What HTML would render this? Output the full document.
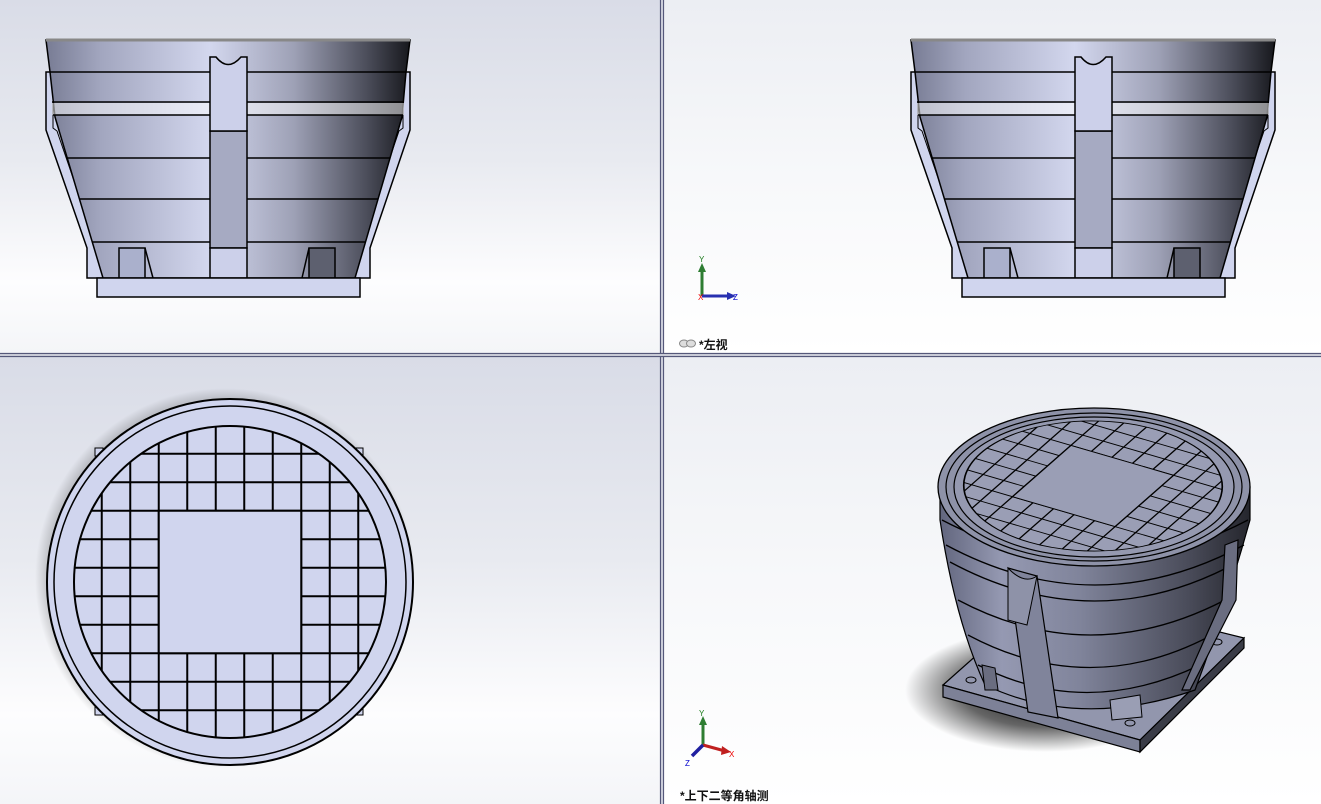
<!DOCTYPE html>
<html><head><meta charset="utf-8"><style>
html,body{margin:0;padding:0;width:1321px;height:804px;overflow:hidden;background:#fff}
svg{display:block}
text{font-family:"Liberation Sans","Noto Sans CJK SC",sans-serif}
</style></head><body>
<svg width="1321" height="804" viewBox="0 0 1321 804" xmlns="http://www.w3.org/2000/svg">
<defs>
<linearGradient id="bgL" x1="0" y1="0" x2="0" y2="1">
<stop offset="0" stop-color="#d9dce7"/><stop offset="0.45" stop-color="#e8eaf0"/><stop offset="0.8" stop-color="#fdfdfe"/><stop offset="1" stop-color="#f4f5f8"/></linearGradient>
<linearGradient id="bgR" x1="0" y1="0" x2="0" y2="1">
<stop offset="0" stop-color="#eceef3"/><stop offset="0.5" stop-color="#f7f8fa"/><stop offset="1" stop-color="#ffffff"/></linearGradient>
<linearGradient id="cone" x1="0" y1="0" x2="1" y2="0">
<stop offset="0" stop-color="#787c94"/><stop offset="0.15" stop-color="#a2a6bf"/><stop offset="0.45" stop-color="#d3d7ee"/><stop offset="0.68" stop-color="#9ea1b6"/><stop offset="0.88" stop-color="#4c4e5b"/><stop offset="1" stop-color="#17181d"/></linearGradient>
<linearGradient id="iso" x1="0" y1="0" x2="1" y2="0">
<stop offset="0" stop-color="#62667e"/><stop offset="0.2" stop-color="#9599b2"/><stop offset="0.45" stop-color="#80849b"/><stop offset="0.8" stop-color="#4a4c5a"/><stop offset="1" stop-color="#25262d"/></linearGradient>
<radialGradient id="shad" cx="0.5" cy="0.5" r="0.5">
<stop offset="0" stop-color="#000" stop-opacity="0.95"/><stop offset="0.6" stop-color="#000" stop-opacity="0.6"/><stop offset="1" stop-color="#000" stop-opacity="0"/></radialGradient>
<radialGradient id="shad2" cx="0.5" cy="0.5" r="0.5">
<stop offset="0.85" stop-color="#000" stop-opacity="0.4"/><stop offset="1" stop-color="#000" stop-opacity="0"/></radialGradient>
<clipPath id="gclip"><circle cx="0" cy="0" r="156"/></clipPath>
<g id="grid">
<circle cx="0" cy="0" r="156" fill="currentColor"/>
<g clip-path="url(#gclip)" stroke="#000" stroke-width="2">
<line x1="-128.25" y1="-160" x2="-128.25" y2="160"/><line x1="-99.75" y1="-160" x2="-99.75" y2="160"/><line x1="-71.25" y1="-160" x2="-71.25" y2="160"/><line x1="-42.75" y1="-160" x2="-42.75" y2="160"/><line x1="-14.25" y1="-160" x2="-14.25" y2="160"/><line x1="14.25" y1="-160" x2="14.25" y2="160"/><line x1="42.75" y1="-160" x2="42.75" y2="160"/><line x1="71.25" y1="-160" x2="71.25" y2="160"/><line x1="99.75" y1="-160" x2="99.75" y2="160"/><line x1="128.25" y1="-160" x2="128.25" y2="160"/>
<line y1="-128.25" x1="-160" y2="-128.25" x2="160"/><line y1="-99.75" x1="-160" y2="-99.75" x2="160"/><line y1="-71.25" x1="-160" y2="-71.25" x2="160"/><line y1="-42.75" x1="-160" y2="-42.75" x2="160"/><line y1="-14.25" x1="-160" y2="-14.25" x2="160"/><line y1="14.25" x1="-160" y2="14.25" x2="160"/><line y1="42.75" x1="-160" y2="42.75" x2="160"/><line y1="71.25" x1="-160" y2="71.25" x2="160"/><line y1="99.75" x1="-160" y2="99.75" x2="160"/><line y1="128.25" x1="-160" y2="128.25" x2="160"/>
</g>
<rect x="-71.25" y="-71.25" width="142.5" height="142.5" fill="currentColor" stroke="#000" stroke-width="2"/>
<circle cx="0" cy="0" r="156" fill="none" stroke="#000" stroke-width="2"/>
</g>
<g id="front" stroke="#000" stroke-width="1.5">
<polygon points="46,72 410,72 410,130 370,248 370,278 87,278 87,248 46,130" fill="#d0d5ee"/>
<polyline points="53,72 53,128 57,131 97,248" fill="none" stroke-width="1"/>
<polyline points="403,72 403,128 399,131 359,248" fill="none" stroke-width="1"/>
<polygon points="46,40 410,40 406,72 402,117 355,278 103,278 55,117 50,72" fill="url(#cone)"/>
<rect x="52" y="103" width="352" height="12" fill="#fff" fill-opacity="0.5" stroke="none"/>
<line x1="50" y1="72" x2="406" y2="72"/>
<line x1="52" y1="102" x2="404" y2="102"/>
<line x1="53" y1="115" x2="403" y2="115"/>
<line x1="67" y1="158" x2="390" y2="158"/>
<line x1="79" y1="199" x2="378" y2="199"/>
<line x1="92" y1="242" x2="365" y2="242"/>
<line x1="46" y1="40" x2="410" y2="40" stroke="#888" stroke-width="3"/>
<rect x="119" y="248" width="26" height="30" fill="#aab0cc"/>
<line x1="145" y1="248" x2="153" y2="278"/>
<rect x="309" y="248" width="26" height="30" fill="#5d606f"/>
<line x1="309" y1="248" x2="302" y2="278"/>
<rect x="210" y="131" width="37" height="117" fill="#a6aac2"/>
<path d="M210,131 L210,57 L216,57 Q228,72 241,57 L247,57 L247,131 Z" fill="#ccd0ea"/>
<rect x="210" y="248" width="37" height="30" fill="#ccd0ea"/>
<rect x="97" y="278" width="263" height="19" fill="#d0d5ee"/>
</g>
</defs>

<rect x="0" y="0" width="661" height="353" fill="url(#bgL)"/>
<rect x="664" y="0" width="657" height="353" fill="url(#bgR)"/>
<rect x="0" y="357" width="661" height="447" fill="url(#bgL)"/>
<rect x="664" y="357" width="657" height="447" fill="url(#bgR)"/>
<rect x="660" y="0" width="4" height="804" fill="#d8dae4"/>
<line x1="660.5" y1="0" x2="660.5" y2="804" stroke="#55587a" stroke-width="1.2"/>
<line x1="663.5" y1="0" x2="663.5" y2="804" stroke="#55587a" stroke-width="1.2"/>
<rect x="0" y="353" width="1321" height="4" fill="#d8dae4"/>
<line x1="0" y1="353.5" x2="1321" y2="353.5" stroke="#55587a" stroke-width="1.2"/>
<line x1="0" y1="356.5" x2="1321" y2="356.5" stroke="#55587a" stroke-width="1.2"/>

<use href="#front"/>
<use href="#front" transform="translate(865,0)"/>

<!-- top view -->
<circle cx="225" cy="578" r="190" fill="url(#shad2)"/>
<rect x="95" y="448" width="8" height="8" fill="#d0d5ee" stroke="#000"/>
<rect x="355" y="448" width="8" height="8" fill="#d0d5ee" stroke="#000"/>
<rect x="95" y="707" width="8" height="8" fill="#d0d5ee" stroke="#000"/>
<rect x="355" y="707" width="8" height="8" fill="#d0d5ee" stroke="#000"/>
<circle cx="230" cy="582" r="183" fill="#d0d5ee" stroke="#000" stroke-width="2"/>
<circle cx="230" cy="582" r="176" fill="none" stroke="#000" stroke-width="1.5"/>
<use href="#grid" transform="translate(230,582)" color="#d0d5ee"/>

<!-- isometric -->
<ellipse cx="1045" cy="690" rx="140" ry="62" fill="url(#shad)"/>
<polygon points="943,685 1140,740 1244,638 1050,590" fill="#9296ad" stroke="#000" stroke-width="1.2"/>
<polygon points="943,685 1140,740 1140,752 943,697" fill="#7d8197" stroke="#000" stroke-width="1.2"/>
<polygon points="1140,740 1244,638 1244,648 1140,752" fill="#3a3c47" stroke="#000" stroke-width="1.2"/>
<ellipse cx="971" cy="680" rx="5" ry="3" fill="none" stroke="#000"/>
<ellipse cx="1130" cy="723" rx="5" ry="3" fill="none" stroke="#000"/>
<ellipse cx="1217" cy="642" rx="5" ry="3" fill="none" stroke="#000"/>
<path d="M940,487 L940,520 Q955,620 985,685 Q1080,730 1195,690 Q1225,610 1250,520 L1250,487 Z" fill="url(#iso)" stroke="#000" stroke-width="1.2"/>
<g fill="none" stroke="#000" stroke-width="1.3">
<path d="M942,520 Q1095,600 1248,520"/>
<path d="M946,545 Q1095,625 1244,545"/>
<path d="M950,562 Q1095,640 1238,562"/>
<path d="M958,600 Q1090,670 1225,600"/>
<path d="M968,635 Q1090,700 1212,635"/>
<path d="M978,665 Q1085,720 1200,665"/>
</g>
<polygon points="1008,568 1037,576 1058,718 1028,712" fill="#80849b" stroke="#000" stroke-width="1.2"/>
<path d="M1008,568 L1008,620 L1027,625 L1037,576 Q1024,585 1008,568 Z" fill="#8e92a8" stroke="#000" stroke-width="1"/>
<polygon points="1225,545 1238,540 1236,600 1190,690 1182,690 1222,600" fill="#6a6d80" stroke="#000" stroke-width="1.2"/>
<polygon points="1110,700 1140,695 1142,717 1112,720" fill="#9a9eb4" stroke="#000" stroke-width="1"/>
<polygon points="982,665 995,668 998,690 985,690" fill="#6a6d80" stroke="#000" stroke-width="1"/>
<ellipse cx="1094" cy="487" rx="156" ry="79" fill="#8e92a8" stroke="#000" stroke-width="1.3"/>
<ellipse cx="1094" cy="487" rx="148" ry="74" fill="none" stroke="#000" stroke-width="1.2"/>
<ellipse cx="1094" cy="487" rx="140" ry="70" fill="#9599b0" stroke="#000" stroke-width="1.2"/>
<use href="#grid" transform="matrix(0.72,0.21,-0.41,0.36,1093,486)" color="#9a9eb5"/>

<!-- triads -->
<line x1="702" y1="296" x2="702" y2="270" stroke="#2e7d32" stroke-width="3"/>
<polygon points="698,272 706,272 702,263" fill="#2e7d32"/>
<line x1="702" y1="296" x2="729" y2="296" stroke="#2730b0" stroke-width="3"/>
<polygon points="727,292 736,296 727,300" fill="#2730b0"/>
<text x="699" y="262" font-size="8" fill="#1a7a1a">Y</text>
<text x="698" y="300" font-size="8" fill="#e00">X</text>
<text x="733" y="300" font-size="8" fill="#00c">Z</text>
<line x1="703" y1="745" x2="703" y2="722" stroke="#2e7d32" stroke-width="3"/>
<polygon points="699,725 707,725 703,716" fill="#2e7d32"/>
<line x1="703" y1="745" x2="725" y2="751" stroke="#c02020" stroke-width="3"/>
<polygon points="722,746 731,752 721,755" fill="#c02020"/>
<line x1="703" y1="745" x2="692" y2="756" stroke="#2020a0" stroke-width="3.5"/>
<text x="699" y="716" font-size="8" fill="#1a7a1a">Y</text>
<text x="729" y="757" font-size="8" fill="#e00">X</text>
<text x="685" y="766" font-size="8" fill="#00c">Z</text>

<ellipse cx="684" cy="343.5" rx="4.5" ry="3.5" fill="#ddd" stroke="#888"/>
<ellipse cx="691" cy="343.5" rx="4.5" ry="3.5" fill="#ddd" stroke="#888"/>
<text x="699" y="349" font-size="12" font-weight="bold" fill="#111">*左视</text>
<text x="680" y="800" font-size="12" font-weight="bold" fill="#111">*上下二等角轴测</text>
</svg>
</body></html>
